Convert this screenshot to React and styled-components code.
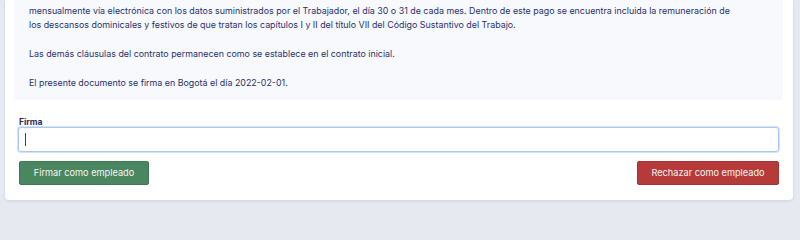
import React from "react";
import styled, { createGlobalStyle } from "styled-components";

const Global = createGlobalStyle`
  html, body { margin: 0; padding: 0; background: #e6e9f0; }
  body { font-family: Inter, "Noto Sans", sans-serif; overflow: hidden; }
`;

const Page = styled.div`
  padding: 0 7px 0 5px;
  height: 206px;
  box-sizing: border-box;
`;

const Card = styled.div`
  background: #ffffff;
  border-radius: 0 0 4px 4px;
  box-shadow: 0 1px 3px rgba(40, 50, 80, 0.12);
  padding: 0 14px 15px 13px;
`;

const Contract = styled.div`
  background: #f8f9fc;
  margin: 0 -4px;
  padding: 3.5px 14px 9px 15px;
  color: #27326c;
  font-size: 8.9px;
  line-height: 14.5px;
`;

const Para = styled.p`
  margin: 0 0 14.5px 0;
  &:last-child { margin-bottom: 0; }
`;

const Form = styled.div`
  display: flex;
  flex-direction: column;
  padding-top: 17px;
`;

const Label = styled.label`
  font-size: 8.5px;
  font-weight: 700;
  color: #262c66;
  margin-left: 1px;
  line-height: 10px;
`;

const InputWrap = styled.div`
  position: relative;
`;

const Input = styled.input`
  display: block;
  width: 100%;
  box-sizing: border-box;
  height: 25px;
  border: 1px solid #a9c8f2;
  box-shadow: 0 0 0 1px #d3e3f8;
  border-radius: 3px;
  background: #fff;
  outline: none;
  font-family: inherit;
  font-size: 12px;
  padding: 0 7px;
`;

const Caret = styled.span`
  position: absolute;
  left: 7px;
  top: 6px;
  width: 1px;
  height: 13px;
  background: #444;
`;

const Actions = styled.div`
  display: flex;
  justify-content: space-between;
  margin-top: 9px;
`;

const Button = styled.button`
  height: 24px;
  border: 1px solid ${(p) => p.$border};
  background: ${(p) => p.$bg};
  color: #f4f6f4;
  border-radius: 2px;
  font-family: Inter, "Noto Sans", sans-serif;
  font-size: 9.2px;
  padding: 0;
  width: ${(p) => p.$w}px;
  margin-left: ${(p) => p.$ml || 0}px;
`;

export default function App() {
  return (
    <>
      <Global />
      <Page>
        <Card>
          <Contract>
            <Para>
              mensualmente vía electrónica con los datos suministrados por el Trabajador, el día 30 o 31 de cada mes. Dentro de este pago se encuentra incluida la remuneración de
              <br />
              los descansos dominicales y festivos de que tratan los capítulos I y II del título VII del Código Sustantivo del Trabajo.
            </Para>
            <Para>Las demás cláusulas del contrato permanecen como se establece en el contrato inicial.</Para>
            <Para>El presente documento se firma en Bogotá el día 2022-02-01.</Para>
          </Contract>
          <Form>
            <Label htmlFor="firma">Firma</Label>
            <InputWrap>
              <Input id="firma" type="text" />
              <Caret />
            </InputWrap>
            <Actions>
              <Button $bg="#4a8660" $border="#3f7a55" $w={130} $ml={1}>Firmar como empleado</Button>
              <Button $bg="#b73a3a" $border="#a83232" $w={142}>Rechazar como empleado</Button>
            </Actions>
          </Form>
        </Card>
      </Page>
    </>
  );
}
